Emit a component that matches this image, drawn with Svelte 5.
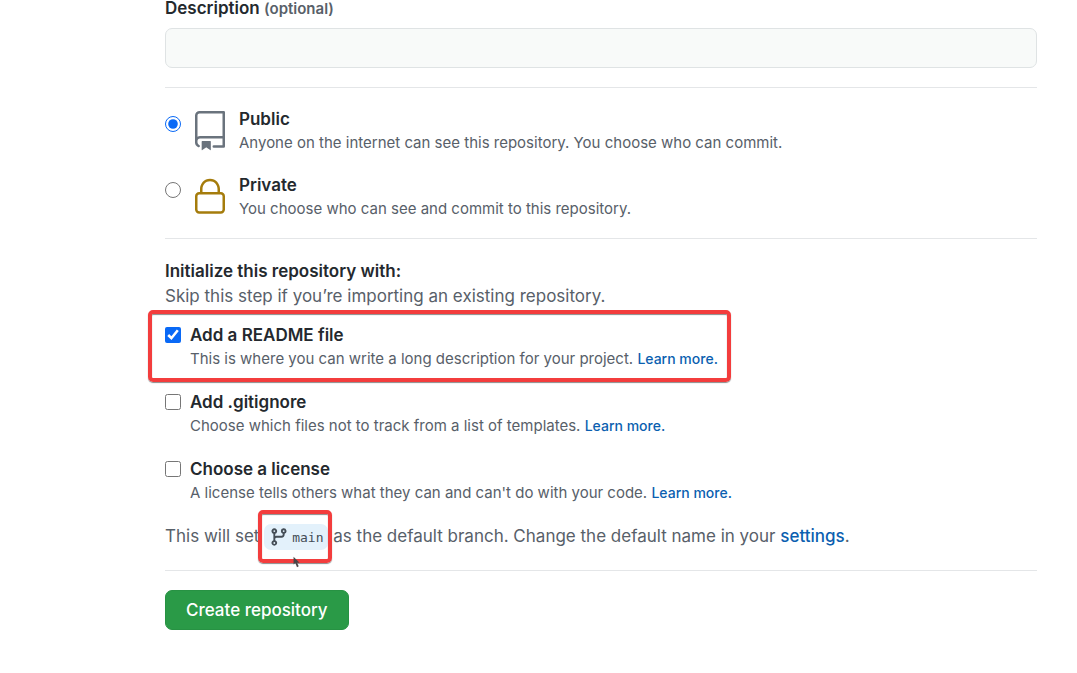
<script>
  let visibility = $state('public');

  const repoIcon =
    'M3 2.75A2.75 2.75 0 015.75 0h14.5a.75.75 0 01.75.75v20.5a.75.75 0 01-.75.75h-6a.75.75 0 010-1.5h5.25v-4H6A1.5 1.5 0 004.5 18v.75c0 .716.43 1.334 1.05 1.605a.75.75 0 01-.6 1.374A3.25 3.25 0 013 18.75v-16zM19.5 1.5V15H6c-.546 0-1.059.146-1.5.401V2.75c0-.69.56-1.25 1.25-1.25H19.5zM7 18.25a.25.25 0 01.25-.25h5a.25.25 0 01.25.25v5.01a.25.25 0 01-.397.201l-2.206-1.604a.25.25 0 00-.294 0L7.397 23.46a.25.25 0 01-.397-.2v-5.01z';
  const lockIcon =
    'M6 9V7.25C6 3.845 8.503 1 12 1s6 2.845 6 6.25V9h.5a2.5 2.5 0 012.5 2.5v8a2.5 2.5 0 01-2.5 2.5h-13A2.5 2.5 0 013 19.5v-8A2.5 2.5 0 015.5 9H6zm1.5-1.75C7.5 4.58 9.422 2.5 12 2.5c2.578 0 4.5 2.08 4.5 4.75V9h-9V7.25zm-3 4.25a1 1 0 011-1h13a1 1 0 011 1v8a1 1 0 01-1 1h-13a1 1 0 01-1-1v-8z';
  const branchIcon =
    'M11.75 2.5a.75.75 0 100 1.5.75.75 0 000-1.5zm-2.25.75a2.25 2.25 0 113 2.122V6A2.5 2.5 0 0110 8.5H6a1 1 0 00-1 1v1.128a2.251 2.251 0 11-1.5 0V5.372a2.25 2.25 0 111.5 0v1.836A2.492 2.492 0 016 7h4a1 1 0 001-1v-.628A2.25 2.25 0 019.5 3.25zM4.25 12a.75.75 0 100 1.5.75.75 0 000-1.5zM3.5 3.25a.75.75 0 111.5 0 .75.75 0 01-1.5 0z';

  const visibilities = [
    { id: 'public', title: 'Public', icon: repoIcon, text: 'Anyone on the internet can see this repository. You choose who can commit.' },
    { id: 'private', title: 'Private', icon: lockIcon, text: 'You choose who can see and commit to this repository.' }
  ];

  let extras = $state([
    { id: 'readme', title: 'Add a README file', text: 'This is where you can write a long description for your project.', checked: true },
    { id: 'gitignore', title: 'Add .gitignore', text: 'Choose which files not to track from a list of templates.', checked: false },
    { id: 'license', title: 'Choose a license', text: "A license tells others what they can and can't do with your code.", checked: false }
  ]);
</script>

<form class="page">
  <label class="title" for="description">Description <small>(optional)</small></label>
  <input class="field" id="description" type="text" />

  <div class="section visibility">
    {#each visibilities as v (v.id)}
      <div class="option">
        <input type="radio" name="visibility" id={v.id} value={v.id} bind:group={visibility} />
        <svg class="icon {v.id}" viewBox="0 0 24 24" aria-hidden="true"><path fill-rule="evenodd" d={v.icon} /></svg>
        <div>
          <label class="title" for={v.id}>{v.title}</label>
          <p class="note">{v.text}</p>
        </div>
      </div>
    {/each}
  </div>

  <div class="section setup">
    <h2 class="title">Initialize this repository with:</h2>
    <p class="lead">Skip this step if you’re importing an existing repository.</p>
    <div class="extras">
      {#each extras as e (e.id)}
        <div class="option extra" class:marked={e.id === 'readme'}>
          <input type="checkbox" id={e.id} bind:checked={e.checked} />
          <div>
            <label class="title" for={e.id}>{e.title}</label>
            <p class="note">{e.text} <a href="#{e.id}">Learn more.</a></p>
          </div>
        </div>
      {/each}
    </div>
    <p class="lead">
      This will set
      <span class="branch">
        <svg viewBox="0 0 16 16" aria-hidden="true"><path fill-rule="evenodd" d={branchIcon} /></svg>
        <code>main</code>
        <svg class="pointer" viewBox="0 0 10 14" aria-hidden="true"><path d="M1 1v9l2-2 2 5 2-1-2-4h3z" /></svg>
      </span>
      as the default branch. Change the default name in your <a href="#settings">settings</a>.
    </p>
  </div>

  <div class="section">
    <button type="button">Create repository</button>
  </div>
</form>

<style>
  :global(body) {
    margin: 0;
    background: #fff;
  }
  .page {
    box-sizing: border-box;
    padding: 0 40px 40px 165px;
    font-family: Inter, 'Liberation Sans', sans-serif;
    font-size: 17px;
    color: #24292e;
  }
  .title {
    display: block;
    margin: 0;
    font-size: 17px;
    line-height: 24px;
    font-weight: 600;
  }
  .page > .title {
    line-height: 16px;
  }
  small {
    font-size: 15px;
    color: #586069;
  }
  .field {
    display: block;
    box-sizing: border-box;
    width: 100%;
    height: 40px;
    margin: 11px 0 19px;
    padding: 0 14px;
    border: 1px solid #dfe3e4;
    border-radius: 7px;
    background: #f8faf9;
    font: inherit;
  }
  .section {
    border-top: 1px solid #e4e6e8;
    padding-top: 19px;
  }
  .visibility {
    display: flex;
    flex-direction: column;
    gap: 19px;
    padding-bottom: 18px;
  }
  .setup {
    padding-top: 20px;
    padding-bottom: 20px;
  }
  .option {
    display: flex;
    align-items: flex-start;
  }
  .option input {
    flex: none;
    width: 16px;
    height: 16px;
    margin: 9px 9px 0 0;
    accent-color: #0969f6;
  }
  .icon {
    flex: none;
    width: 40px;
    height: 40px;
    margin: 4px 9px 0 0;
    fill: #6a737d;
  }
  .icon.private {
    fill: #a57c0c;
  }
  p {
    margin: 0;
  }
  .note {
    font-size: 15px;
    line-height: 23px;
    color: #586069;
  }
  .lead {
    line-height: 26px;
    color: #586069;
  }
  a {
    color: #0b5fb0;
    font-weight: 500;
    text-decoration: none;
  }
  .note a {
    font-size: 14px;
  }
  .extras {
    display: flex;
    flex-direction: column;
    gap: 20px;
    padding: 14px 0 19px;
  }
  .extra {
    position: relative;
  }
  .extra input {
    margin-top: 4px;
  }
  .marked::after,
  .branch::after {
    content: '';
    position: absolute;
    box-sizing: border-box;
    border: 4px solid #f33d3d;
    border-radius: 5px;
    box-shadow: 0 1px 1px #8b8b8b, inset 0 1px 1px #8b8b8b;
    pointer-events: none;
  }
  .marked::after {
    inset: -13px auto -12px -17px;
    width: 583px;
  }
  .branch {
    position: relative;
    display: inline-flex;
    align-items: center;
    gap: 3px;
    height: 26px;
    padding: 0 5px;
    border-radius: 7px;
    background: #e3f1fb;
    color: #444d56;
    vertical-align: middle;
  }
  .branch svg {
    width: 20px;
    height: 20px;
    fill: #444d56;
  }
  .branch code {
    font: 13px 'DejaVu Sans Mono', monospace;
  }
  .branch::after {
    inset: -14px -4px -13px -6px;
  }
  .branch .pointer {
    position: absolute;
    top: 32px;
    left: 28px;
    z-index: 1;
    width: 10px;
    height: 12px;
    fill: #4a4548;
  }
  button {
    display: block;
    height: 40px;
    padding: 0 20px;
    border: 1px solid #279243;
    border-radius: 7px;
    background: #2a9a47;
    color: #fff;
    font: 500 17px Inter, 'Liberation Sans', sans-serif;
  }
</style>
